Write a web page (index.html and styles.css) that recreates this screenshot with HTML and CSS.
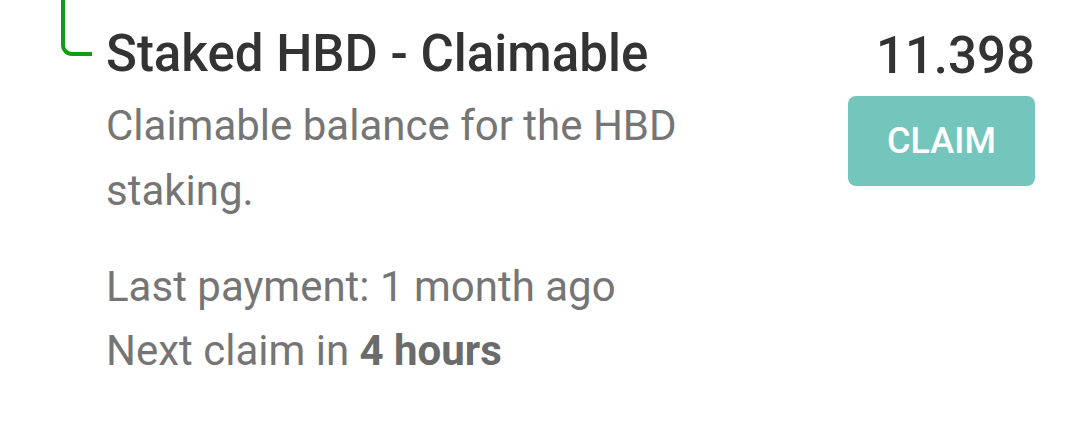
FILE: index.html
```html
<!DOCTYPE html>
<html lang="en">
<head>
<meta charset="utf-8">
<title>Staked HBD - Claimable</title>
<link rel="stylesheet" href="styles.css">
</head>
<body>
<div class="item">
  <div class="gutter"><span class="connector"></span></div>
  <div class="content">
    <div class="info">
      <div class="title">Staked HBD - Claimable</div>
      <div class="desc">Claimable balance for the HBD staking.</div>
      <div class="meta">
        <div class="meta-line">Last payment: 1 month ago</div>
        <div class="meta-line">Next claim in <b>4 hours</b></div>
      </div>
    </div>
    <div class="side">
      <div class="value">11.398</div>
      <button class="claim">CLAIM</button>
    </div>
  </div>
</div>
</body>
</html>
```

FILE: styles.css
```css
html, body {
  margin: 0;
  padding: 0;
  background: #ffffff;
}
body {
  font-family: Roboto, "Noto Sans", Arial, sans-serif;
  width: 1080px;
  height: 430px;
  overflow: hidden;
}
.item {
  display: flex;
  align-items: flex-start;
}
.gutter {
  width: 106px;
  flex: none;
}
.connector {
  display: block;
  margin-left: 61px;
  width: 27px;
  height: 52px;
  border-left: 4px solid #139b17;
  border-bottom: 4px solid #139b17;
  border-bottom-left-radius: 11px;
}
.content {
  flex: 1;
  display: flex;
  justify-content: space-between;
  padding-right: 45px;
  padding-top: 24px;
}
.info {
  width: 640px;
}
.title {
  font-size: 51px;
  font-weight: 500;
  line-height: 60px;
  color: #333333;
}
.desc {
  margin-top: 9px;
  font-size: 42px;
  line-height: 65px;
  color: #757575;
}
.meta {
  margin-top: 32px;
  font-size: 42px;
  line-height: 64px;
  color: #757575;
}
.meta b {
  font-weight: 700;
  color: #6b6b6b;
}
.side {
  display: flex;
  flex-direction: column;
  align-items: flex-end;
}
.value {
  font-size: 51px;
  font-weight: 500;
  line-height: 60px;
  color: #333333;
  margin-top: 2px;
}
.claim {
  margin-top: 10px;
  width: 187px;
  height: 90px;
  border: none;
  border-radius: 8px;
  background: #74c6bc;
  color: #ffffff;
  font-family: Roboto, "Noto Sans", Arial, sans-serif;
  font-size: 36px;
  font-weight: 500;
  padding: 0;
}
```
